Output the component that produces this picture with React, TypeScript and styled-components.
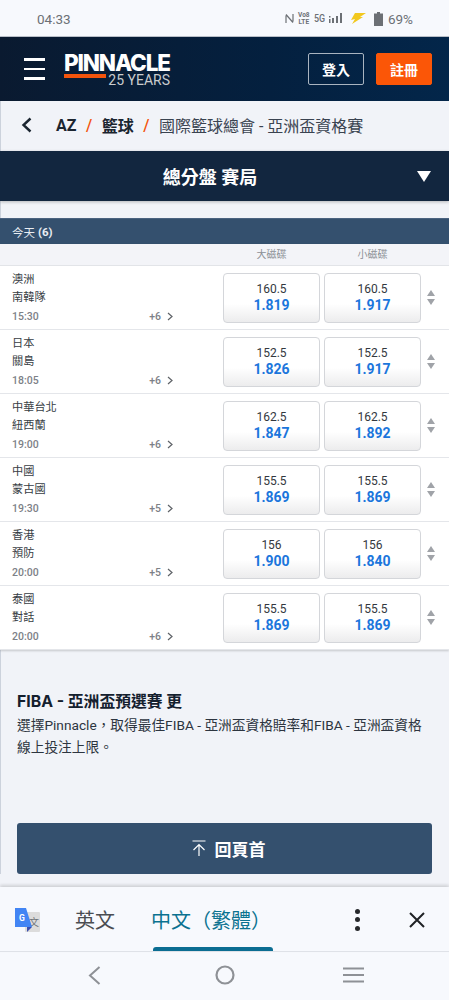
import { createGlobalStyle, styled } from "styled-components";

const GlobalStyle = createGlobalStyle`
  html, body { margin: 0; padding: 0; background: #f1f3f8; }
  * { box-sizing: border-box; }
  body { font-family: Roboto, "Noto Sans CJK TC", sans-serif; }
`;

const Screen = styled.div`
  width: 449px;
  height: 1000px;
  display: flex;
  flex-direction: column;
  overflow: hidden;
  background: #f1f3f8;
`;

/* status bar */
const StatusBar = styled.div`
  height: 37px;
  flex: none;
  display: flex;
  align-items: center;
  justify-content: space-between;
  padding: 1px 37px 0 37px;
  background: #f7f9fd;
  color: #6c7075;
  font-size: 13.5px;
  border-bottom: 1px solid #b9bfc8;
`;
const StatusIcons = styled.div`
  display: flex;
  align-items: center;
  gap: 4px;
  margin-right: -1px;
`;
const Volte = styled.span`
  font-size: 6.5px;
  line-height: 6.5px;
  font-weight: 700;
  text-align: center;
  width: 12px;
`;
const FiveG = styled.span`
  font-size: 10.5px;
  font-weight: 500;
  transform: scaleX(0.85);
  margin: 0 -1px;
`;

/* site header */
const Header = styled.header`
  height: 64px;
  flex: none;
  display: flex;
  align-items: center;
  padding: 0 17px 0 24px;
  background: linear-gradient(90deg, #0a1a30 0%, #04203f 60%, #03264a 100%);
`;
const Burger = styled.div`
  width: 21px;
  display: flex;
  flex-direction: column;
  gap: 7px;
  margin-right: 19px;
  span {
    display: block;
    height: 2.5px;
    background: #fff;
  }
`;
const Logo = styled.div`
  width: 106px;
  display: flex;
  flex-direction: column;
`;
const LogoName = styled.div`
  color: #fff;
  font-family: Inter, sans-serif;
  font-weight: 800;
  font-size: 22.5px;
  line-height: 22px;
  letter-spacing: -1.15px;
  white-space: nowrap;
`;
const LogoSub = styled.div`
  display: flex;
  align-items: flex-start;
  gap: 2px;
  color: #c9ccce;
  font-size: 14px;
  line-height: 13px;
  white-space: nowrap;
  i {
    flex: 1;
    height: 4px;
    background: #f4540c;
  }
`;
const HeaderActions = styled.div`
  margin-left: auto;
  display: flex;
  gap: 12px;
`;
const HeaderButton = styled.div<{ $primary?: boolean }>`
  width: 56px;
  height: 32px;
  display: flex;
  align-items: center;
  justify-content: center;
  border-radius: 2px;
  color: #fff;
  font-size: 14px;
  font-weight: 700;
  background: ${(p) => (p.$primary ? "#fb5607" : "transparent")};
  border: 1px solid ${(p) => (p.$primary ? "#fb5607" : "#a9b4c0")};
`;

/* page body */
const Main = styled.main`
  flex: none;
  display: flex;
  flex-direction: column;
  border-left: 1px solid #ccd2dc;
  background: #f1f3f8;
`;
const Breadcrumb = styled.nav`
  height: 50px;
  flex: none;
  display: flex;
  align-items: center;
  padding: 0 0 2px 20px;
  font-size: 16px;
  color: #2d3640;
`;
const Crumb = styled.span<{ $strong?: boolean }>`
  font-weight: ${(p) => (p.$strong ? 700 : 400)};
  color: ${(p) => (p.$strong ? "#1b2530" : "#3a4350")};
  white-space: nowrap;
`;
const Slash = styled.span`
  color: #f4540c;
  font-weight: 500;
  margin: 0 9.5px;
`;
const BackIcon = styled.svg`
  width: 11px;
  height: 16px;
  margin-right: 24px;
`;
const TitleBar = styled.div`
  height: 50px;
  flex: none;
  margin-left: -1px;
  padding-right: 29px;
  position: relative;
  display: flex;
  align-items: center;
  justify-content: center;
  background: #12263f;
  color: #fff;
  font-size: 18px;
  font-weight: 700;
  box-shadow: 0 1px 3px rgba(0, 0, 0, 0.25);
  svg {
    position: absolute;
    right: 18px;
    top: 20px;
  }
`;
const DayBar = styled.div`
  height: 26px;
  flex: none;
  margin: 17px 0 0 -1px;
  padding-left: 12px;
  display: flex;
  align-items: center;
  gap: 3px;
  background: #34506e;
  border-top: 1px solid #4a6280;
  color: #e9edf2;
  font-size: 11.5px;
  b {
    font-weight: 700;
  }
`;
const Table = styled.section`
  flex: none;
  background: #fff;
  margin-left: -1px;
  box-shadow: 0 1px 2px rgba(0, 0, 0, 0.18);
`;
const ColumnHead = styled.div`
  height: 22px;
  display: flex;
  align-items: center;
  padding: 0 0 2px 223px;
  gap: 4px;
  background: #f3f4f8;
  border-bottom: 1px solid #e2e4e8;
  color: #8b8f95;
  font-size: 10px;
  span {
    width: 97px;
    text-align: center;
  }
`;
const Row = styled.div`
  height: 64px;
  display: flex;
  align-items: center;
  padding: 0 0 0 12px;
  border-bottom: 1px solid #e4e6ea;
  background: #fff;
`;
const Teams = styled.div`
  width: 211px;
  flex: none;
  padding-top: 1px;
`;
const Team = styled.div`
  font-size: 11.2px;
  line-height: 17.5px;
  color: #373d44;
`;
const MetaLine = styled.div`
  height: 17px;
  display: flex;
  align-items: center;
  justify-content: space-between;
  padding-right: 50px;
  margin-top: 2px;
  font-size: 10.5px;
  color: #7d8187;
  font-weight: 500;
`;
const More = styled.span`
  display: flex;
  align-items: center;
  gap: 6px;
`;
const Odds = styled.div`
  width: 97px;
  height: 50px;
  flex: none;
  margin-right: 4px;
  padding-bottom: 2px;
  display: flex;
  flex-direction: column;
  align-items: center;
  justify-content: center;
  border: 1px solid #d4d6da;
  border-radius: 4px;
  background: linear-gradient(180deg, #fff 0%, #fff 62%, #ececed 100%);
`;
const Line = styled.div`
  font-size: 12px;
  line-height: 16px;
  color: #33383e;
`;
const Price = styled.div`
  font-size: 14px;
  line-height: 16px;
  font-weight: 700;
  color: #1b76dc;
`;
const Sorter = styled.div`
  display: flex;
  flex-direction: column;
  gap: 3px;
  width: 12px;
  align-items: center;
`;
const Arrow = styled.i<{ $down?: boolean }>`
  width: 0;
  height: 0;
  border-left: 4px solid transparent;
  border-right: 4px solid transparent;
  ${(p) => (p.$down ? "border-top" : "border-bottom")}: 6px solid #a0a3a8;
`;
const Promo = styled.section`
  flex: none;
  padding: 42px 16px 0;
  height: 173px;
  color: #2d3540;
`;
const PromoTitle = styled.h2`
  margin: 0 0 2px;
  font-size: 15.8px;
  line-height: 20px;
  font-weight: 700;
  color: #14202e;
  font-family: Inter, "Noto Sans CJK TC", sans-serif;
`;
const PromoText = styled.p`
  margin: 0;
  font-size: 13.7px;
  line-height: 22px;
`;
const TopButton = styled.div`
  flex: none;
  height: 51px;
  margin: 0 17px 0 16px;
  padding-left: 8px;
  display: flex;
  align-items: center;
  justify-content: center;
  gap: 9px;
  border-radius: 3px;
  background: #34506e;
  color: #fff;
  font-size: 17px;
  font-weight: 700;
`;

/* translate sheet */
const TranslateBar = styled.div`
  position: relative;
  height: 65px;
  flex: none;
  margin-top: 13px;
  display: flex;
  align-items: center;
  padding: 1px 0 0 14px;
  background: #f7f9fd;
  border-bottom: 1px solid #dfe2e8;
  box-shadow: 0 -2px 3px rgba(0, 0, 0, 0.14);
`;
const Lang = styled.span<{ $active?: boolean }>`
  font-size: 20px;
  color: ${(p) => (p.$active ? "#0b7290" : "#4a4d52")};
  white-space: nowrap;
`;
const ActiveLine = styled.i`
  position: absolute;
  left: 153px;
  bottom: 0;
  width: 120px;
  height: 4px;
  border-radius: 3px 3px 0 0;
  background: #0b6d92;
`;
const Kebab = styled.div`
  margin-left: auto;
  margin-right: 49px;
  display: flex;
  flex-direction: column;
  gap: 3.5px;
  i {
    width: 5px;
    height: 5px;
    border-radius: 50%;
    background: #26282b;
  }
`;
const NavBar = styled.div`
  flex: 1;
  display: flex;
  align-items: center;
  padding: 0 0 2px 88px;
  background: #f7f9fd;
`;
const NavSlot = styled.div<{ $w: number }>`
  width: ${(p) => p.$w}px;
  display: flex;
`;

const games = [
  { a: "澳洲", b: "南韓隊", t: "15:30", n: 6, l: "160.5", o: "1.819", u: "1.917" },
  { a: "日本", b: "關島", t: "18:05", n: 6, l: "152.5", o: "1.826", u: "1.917" },
  { a: "中華台北", b: "紐西蘭", t: "19:00", n: 6, l: "162.5", o: "1.847", u: "1.892" },
  { a: "中國", b: "蒙古國", t: "19:30", n: 5, l: "155.5", o: "1.869", u: "1.869" },
  { a: "香港", b: "預防", t: "20:00", n: 5, l: "156", o: "1.900", u: "1.840" },
  { a: "泰國", b: "對話", t: "20:00", n: 6, l: "155.5", o: "1.869", u: "1.869" },
];

export default function App() {
  return (
    <Screen>
      <GlobalStyle />
      <StatusBar>
        <span>04:33</span>
        <StatusIcons>
          <svg width="9" height="11" viewBox="0 0 9 11" fill="none" stroke="#6c7075" strokeWidth="1.2">
            <path d="M1 2.5 L1 10 M8 1 L8 8.5 M1 1.5 L8 9.5" />
          </svg>
          <Volte>Vo8<br />LTE</Volte>
          <FiveG>5G</FiveG>
          <svg width="14" height="11" viewBox="0 0 14 11" fill="#6c7075">
            <rect x="0" y="3" width="1.5" height="1.5" />
            <rect x="0" y="6" width="1.5" height="4" />
            <rect x="3" y="5" width="2" height="5" />
            <rect x="7" y="3" width="2" height="7" />
            <rect x="11" y="0" width="2" height="10" />
          </svg>
          <svg width="17" height="13" viewBox="0 0 17 13" fill="#f2c81e" style={{ margin: "0 3px" }}>
            <path d="M5 1 L16 1 L10 5 L13 5 L2 12 L5 7 L1 8 Z" />
          </svg>
          <svg width="9" height="14" viewBox="0 0 9 14" fill="#6c7075">
            <path d="M3 0 H6 V1.5 H9 V14 H0 V1.5 H3 Z" />
          </svg>
          <span style={{ marginLeft: 1 }}>69%</span>
        </StatusIcons>
      </StatusBar>

      <Header>
        <Burger><span /><span /><span /></Burger>
        <Logo>
          <LogoName>PINNACLE</LogoName>
          <LogoSub><i /><span>25 YEARS</span></LogoSub>
        </Logo>
        <HeaderActions>
          <HeaderButton>登入</HeaderButton>
          <HeaderButton $primary>註冊</HeaderButton>
        </HeaderActions>
      </Header>

      <Main>
        <Breadcrumb>
          <BackIcon viewBox="0 0 11 16" fill="none" stroke="#1b2530" strokeWidth="2.4">
            <path d="M9.5 1.5 L2.5 8 L9.5 14.5" />
          </BackIcon>
          <Crumb $strong>AZ</Crumb>
          <Slash>/</Slash>
          <Crumb $strong>籃球</Crumb>
          <Slash>/</Slash>
          <Crumb>國際籃球總會 - 亞洲盃資格賽</Crumb>
        </Breadcrumb>

        <TitleBar>
          總分盤 賽局
          <svg width="14" height="11" viewBox="0 0 14 11" fill="#fff">
            <path d="M0 0 H14 L7 11 Z" />
          </svg>
        </TitleBar>

        <DayBar>今天 <b>(6)</b></DayBar>
        <Table>
          <ColumnHead><span>大磁碟</span><span>小磁碟</span></ColumnHead>
          {games.map((g) => (
            <Row key={g.a}>
              <Teams>
                <Team>{g.a}</Team>
                <Team>{g.b}</Team>
                <MetaLine>
                  <span>{g.t}</span>
                  <More>
                    +{g.n}
                    <svg width="6" height="9" viewBox="0 0 6 9" fill="none" stroke="#5e6267" strokeWidth="1.2">
                      <path d="M1 1 L5 4.5 L1 8" />
                    </svg>
                  </More>
                </MetaLine>
              </Teams>
              <Odds><Line>{g.l}</Line><Price>{g.o}</Price></Odds>
              <Odds><Line>{g.l}</Line><Price>{g.u}</Price></Odds>
              <Sorter><Arrow /><Arrow $down /></Sorter>
            </Row>
          ))}
        </Table>

        <Promo>
          <PromoTitle>FIBA - 亞洲盃預選賽 更</PromoTitle>
          <PromoText>選擇Pinnacle，取得最佳FIBA - 亞洲盃資格賠率和FIBA - 亞洲盃資格線上投注上限。</PromoText>
        </Promo>

        <TopButton>
          <svg width="14" height="17" viewBox="0 0 14 17" fill="none" stroke="#fff" strokeWidth="1.2">
            <path d="M0.5 1 H13.5 M7 16 V5 M1.5 10 L7 4.5 L12.5 10" />
          </svg>
          回頁首
        </TopButton>
      </Main>

      <TranslateBar>
        <svg width="26" height="26" viewBox="0 0 26 26" style={{ marginRight: 35 }}>
          <rect x="11" y="5" width="15" height="20" rx="1" fill="#dcdcdc" />
          <text x="15" y="19" fontSize="10" fill="#6f7478" fontFamily="Noto Sans CJK TC">文</text>
          <path d="M1 1 H12 L18 20 H1 Z" fill="#4285f4" />
          <path d="M13 20 H18 L13 25 Z" fill="#3a4fb0" />
          <text x="5" y="14" fontSize="8.5" fontWeight="700" fill="#fff" fontFamily="Roboto">G</text>
        </svg>
        <Lang>英文</Lang>
        <Lang $active style={{ marginLeft: 36 }}>中文（繁體）</Lang>
        <ActiveLine />
        <Kebab><i /><i /><i /></Kebab>
        <svg width="16" height="16" viewBox="0 0 16 16" fill="none" stroke="#202225" strokeWidth="2" style={{ marginRight: 24 }}>
          <path d="M1 1 L15 15 M15 1 L1 15" />
        </svg>
      </TranslateBar>

      <NavBar>
        <NavSlot $w={127}>
          <svg width="13" height="19" viewBox="0 0 13 19" fill="none" stroke="#8e9196" strokeWidth="2">
            <path d="M11.5 1 L2 9.5 L11.5 18" />
          </svg>
        </NavSlot>
        <NavSlot $w={128}>
          <svg width="20" height="20" viewBox="0 0 20 20" fill="none" stroke="#8e9196" strokeWidth="2.2">
            <circle cx="10" cy="10" r="8.5" />
          </svg>
        </NavSlot>
        <NavSlot $w={21}>
          <svg width="21" height="16" viewBox="0 0 21 16" fill="none" stroke="#8e9196" strokeWidth="2">
            <path d="M0 1.5 H21 M0 8 H21 M0 14.5 H21" />
          </svg>
        </NavSlot>
      </NavBar>
    </Screen>
  );
}
